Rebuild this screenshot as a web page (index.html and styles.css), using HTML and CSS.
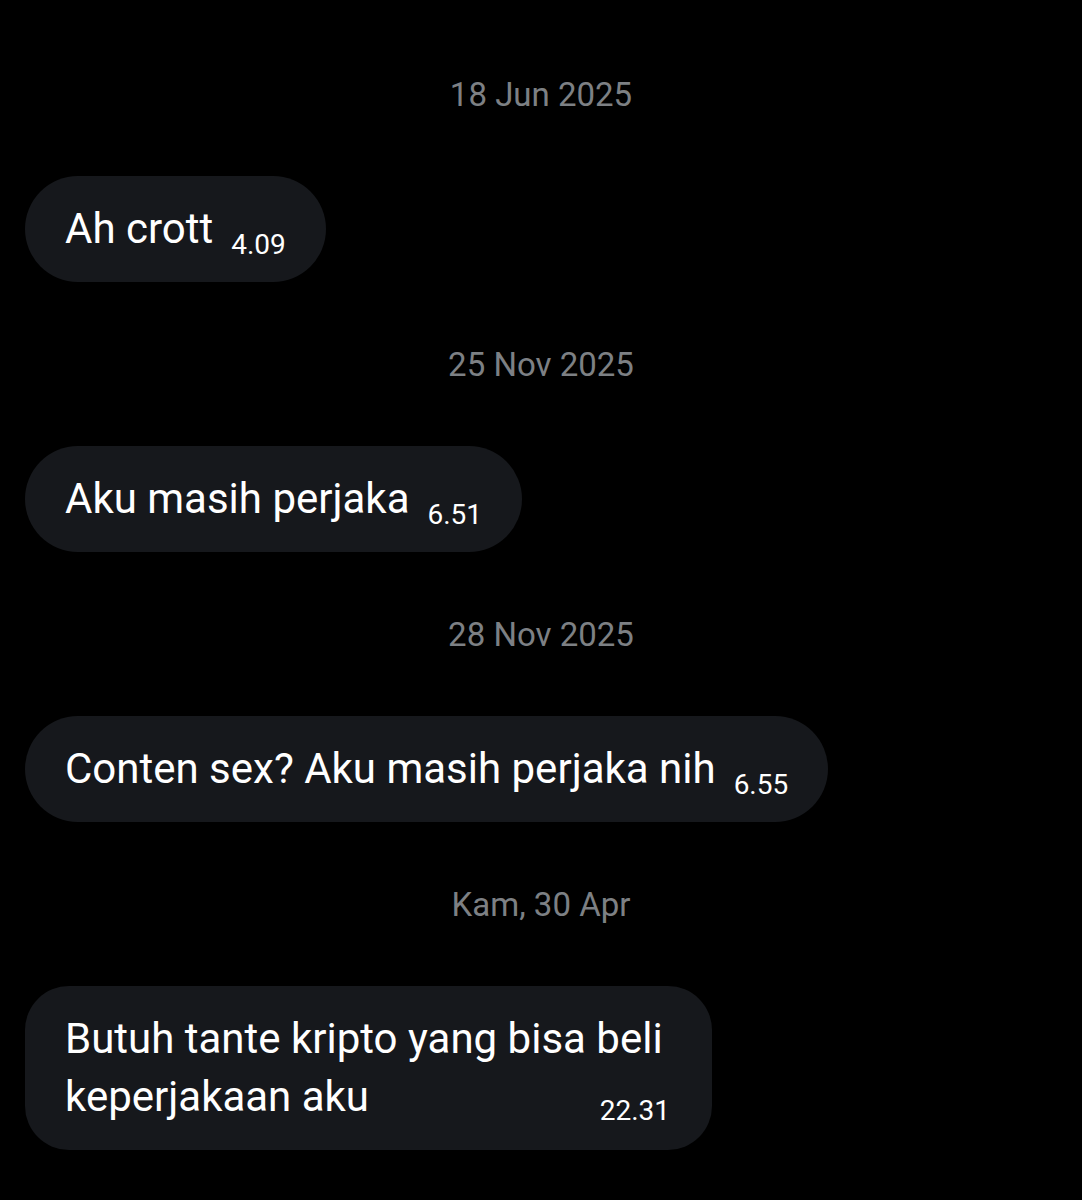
FILE: index.html
```html
<!DOCTYPE html>
<html lang="id">
<head>
<meta charset="utf-8">
<link rel="stylesheet" href="styles.css">
</head>
<body>
<main class="chat">
  <section class="day">
    <div class="date">18 Jun 2025</div>
    <div class="bubble"><span class="time">4.09</span>Ah crott</div>
  </section>
  <section class="day">
    <div class="date">25 Nov 2025</div>
    <div class="bubble"><span class="time">6.51</span>Aku masih perjaka</div>
  </section>
  <section class="day">
    <div class="date">28 Nov 2025</div>
    <div class="bubble"><span class="time">6.55</span>Conten sex? Aku masih perjaka nih</div>
  </section>
  <section class="day">
    <div class="date">Kam, 30 Apr</div>
    <div class="bubble wide">
      <div class="line">Butuh tante kripto yang bisa beli</div>
      <div class="last-row">
        <span class="line">keperjakaan aku</span>
        <span class="time end">22.31</span>
      </div>
    </div>
  </section>
</main>
</body>
</html>
```
FILE: styles.css
```css
html, body {
  margin: 0;
  padding: 0;
  background: #000;
}
body {
  font-family: Roboto, "Noto Sans", sans-serif;
  color: #fff;
}
.chat {
  padding: 75px 25px 0;
  display: flex;
  flex-direction: column;
}
.day {
  display: flex;
  flex-direction: column;
  align-items: flex-start;
}
.day + .day {
  margin-top: 63px;
}
.date {
  align-self: stretch;
  text-align: center;
  height: 40px;
  line-height: 40px;
  font-size: 33px;
  color: #7d8084;
  margin-bottom: 61px;
}
.bubble {
  background: #16181c;
  border-radius: 53px;
  padding: 24px 40px;
  font-size: 42px;
  line-height: 58px;
  white-space: nowrap;
}
.bubble.wide {
  width: 607px;
  border-radius: 44px;
}
.last-row {
  display: flex;
  justify-content: space-between;
  align-items: flex-end;
}
.time {
  float: right;
  font-size: 28px;
  line-height: 26px;
  margin: 32px 0 0 18px;
}
.time.end {
  float: none;
  margin: 0 2px 0 0;
  line-height: 30px;
}
```
